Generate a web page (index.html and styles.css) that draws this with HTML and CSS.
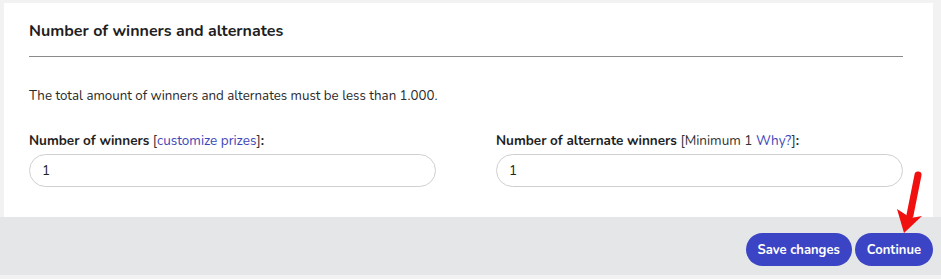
FILE: index.html
```html
<!DOCTYPE html>
<html>
<head>
	<meta charset="UTF-8">
	<title>winners</title>
	<link rel="stylesheet" href="styles.css">
</head>
<body>
	<div class="page">
		<div class="card">
			<h2 class="title">Number of winners and alternates</h2>
			<p class="note">The total amount of winners and alternates must be less than 1.000.</p>
			<div class="fields">
				<div class="field">
					<label><b>Number of winners</b> [<a href="#">customize prizes</a>]<b>:</b></label>
					<input type="text" value="1">
				</div>
				<div class="field">
					<label><b>Number of alternate winners</b> [Minimum 1 <a href="#">Why?</a>]<b>:</b></label>
					<input type="text" value="1">
				</div>
			</div>
		</div>
		<div class="actions">
			<button class="btn">Save changes</button>
			<button class="btn">Continue</button>
			<svg class="arrow" width="40" height="70" viewBox="0 0 40 70">
				<path d="M29 6 L21 46" stroke="#f01010" stroke-width="7" stroke-linecap="round" fill="none"/>
				<path d="M8 40 L15 64 L33 47 L22 49 Z" fill="#f01010"/>
			</svg>
		</div>
	</div>
</body>
</html>
```

FILE: styles.css
```css
*{
	margin:0;
	padding:0;
	box-sizing:border-box;
}
body{
	background:#f2f2f3;
	font-family:"Nunito","Noto Sans","Liberation Sans",sans-serif;
	color:#222;
	width:941px;
	height:279px;
	overflow:hidden;
}
.page{
	padding-top:3px;
	position:relative;
}
.card{
	background:#fff;
	margin-left:4px;
	width:929px;
	height:214px;
	padding:17px 30px 0 25px;
}
.title{
	font-size:16px;
	font-weight:700;
	color:#1e1e1e;
	padding-bottom:14px;
	border-bottom:1px solid #8a8a8a;
}
.note{
	font-size:13.3px;
	margin-top:30px;
	color:#2a2a2a;
}
.fields{
	display:grid;
	grid-template-columns:407px 407px;
	column-gap:60px;
	margin-top:26px;
}
.field label{
	display:block;
	font-size:13.5px;
	color:#333;
	margin-bottom:4px;
}
.field label b{
	color:#1e1e1e;
}
.field a{
	color:#3c46b8;
	text-decoration:none;
}
.field input{
	display:block;
	width:407px;
	height:33px;
	border:1px solid #cfcfcf;
	border-radius:17px;
	padding:0 12px;
	font-family:inherit;
	font-size:13.5px;
	color:#222;
	outline:none;
}
.actions{
	background:#e5e6e8;
	height:58px;
	display:flex;
	justify-content:flex-end;
	align-items:center;
	gap:3px;
	padding-right:8px;
	padding-top:7px;
	position:relative;
}
.btn{
	background:#3b44c4;
	color:#fff;
	border:none;
	border-radius:17px;
	height:33px;
	padding:0 12px;
	font-family:inherit;
	font-size:13px;
	font-weight:700;
}
.arrow{
	position:absolute;
	right:12px;
	top:-48px;
}
```
